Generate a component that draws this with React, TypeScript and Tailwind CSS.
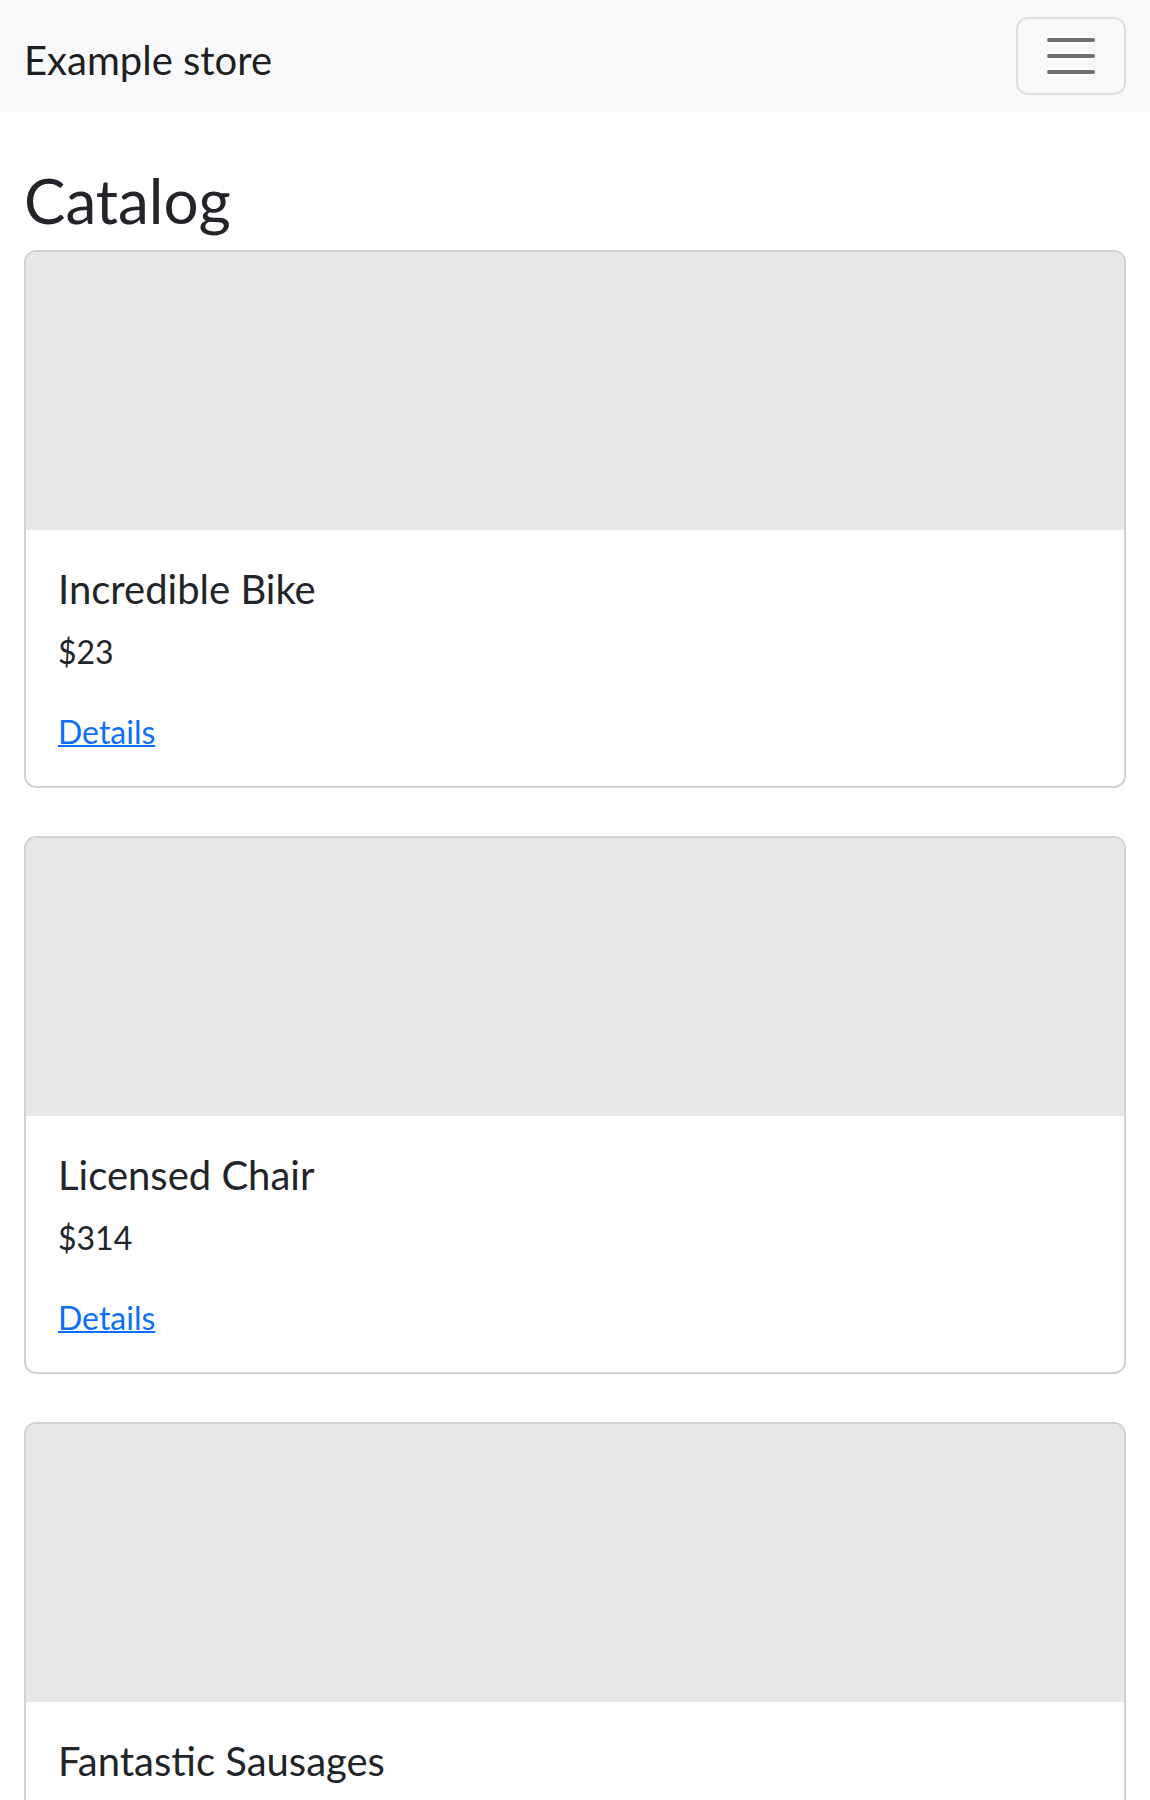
const products = [
  { id: 1, name: 'Incredible Bike', price: 23 },
  { id: 2, name: 'Licensed Chair', price: 314 },
  { id: 3, name: 'Fantastic Sausages', price: 862 },
];

function TogglerIcon() {
  return (
    <svg width="60" height="60" viewBox="0 0 30 30" fill="none">
      <path
        d="M4 7h22M4 15h22M4 23h22"
        stroke="rgba(0,0,0,0.55)"
        strokeWidth="2"
        strokeLinecap="round"
        strokeMiterlimit="10"
      />
    </svg>
  );
}

function ProductCard({ name, price }: { name: string; price: number }) {
  return (
    <div className="mb-12 overflow-hidden rounded-[12px] border-2 border-[#d2d2d2] bg-white">
      <div className="h-[278px] bg-[#e7e7e7]" />
      <div className="px-8 pt-8 pb-7">
        <h5 className="mb-[10px] text-[40px] leading-[54px] font-normal">{name}</h5>
        <p className="mb-7 text-[32px] leading-[52px]">${price}</p>
        <a href="#" className="block w-fit text-[32px] leading-[52px] text-[#0d6efd] underline decoration-2">
          Details
        </a>
      </div>
    </div>
  );
}

export default function App() {
  return (
    <div className="min-h-screen bg-white font-['Lato','Noto_Sans',sans-serif] text-[#212529]">
      <nav className="flex h-[112px] items-center justify-between bg-[#f8f9fa] px-6">
        <a href="#" className="pt-[14px] pb-[6px] text-[40px] leading-[60px] text-black/90">
          Example store
        </a>
        <button className="flex h-[78px] w-[110px] items-center justify-center rounded-[12px] border-2 border-black/10">
          <TogglerIcon />
        </button>
      </nav>

      <main className="px-6 pt-12">
        <h1 className="mb-[10px] text-[62px] leading-[80px] font-normal">Catalog</h1>
        {products.map(p => (
          <ProductCard key={p.id} name={p.name} price={p.price} />
        ))}
      </main>
    </div>
  );
}
